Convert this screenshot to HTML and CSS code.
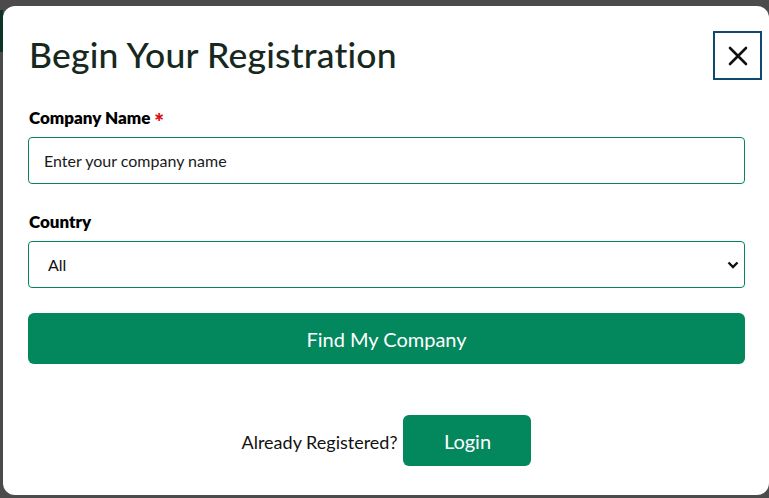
FILE: index.html
```html
<!DOCTYPE html>
<html lang="en">
<head>
  <meta charset="UTF-8">
  <meta name="viewport" content="width=device-width, initial-scale=1.0">
  <title>Begin Your Registration</title>
  <link rel="stylesheet" href="styles.css">
</head>
<body>
  <div class="backdrop">
    <div class="bg-strip"></div>
    <div class="modal">
      <div class="modal-head">
        <h2>Begin Your Registration</h2>
        <button class="close" aria-label="Close">
          <svg width="20" height="20" viewBox="0 0 20 20"><path d="M2 2L18 18M18 2L2 18" stroke="#111" stroke-width="2.6" stroke-linecap="round"/></svg>
        </button>
      </div>

      <label for="companyName">Company Name <span class="req">*</span></label>
      <input type="text" id="companyName" placeholder="Enter your company name">

      <label for="country">Country</label>
      <div class="select-wrap">
        <select id="country">
          <option value="all">All</option>
        </select>
        <svg class="chev" width="12" height="8" viewBox="0 0 12 8"><path d="M1.5 1.5L6 6L10.5 1.5" stroke="#111" stroke-width="2.4" fill="none"/></svg>
      </div>

      <button class="btn btn-find">Find My Company</button>

      <div class="footer">
        <span>Already Registered?</span>
        <button class="btn btn-login">Login</button>
      </div>
    </div>
  </div>
</body>
</html>
```

FILE: styles.css
```css
body {
  margin: 0;
  font-family: Lato, "Noto Sans", sans-serif;
  background: #4b4b4b;
  height: 100vh;
  overflow: hidden;
}
.backdrop {
  position: relative;
  height: 100%;
  padding: 6px 0 3px 3px;
  box-sizing: border-box;
}
.bg-strip {
  position: absolute;
  left: 0;
  top: 10px;
  width: 3px;
  height: 42px;
  background: #0f3326;
}
.modal {
  position: relative;
  background: #fff;
  border-radius: 12px;
  height: 100%;
  padding: 0 24px 0 25px;
  box-sizing: border-box;
}
.modal-head {
  display: flex;
  justify-content: space-between;
  align-items: flex-start;
  padding-top: 25px;
  margin-bottom: 28px;
}
h2 {
  margin: 2px 0 0 1px;
  font-size: 35.5px;
  font-weight: 500;
  color: #17291f;
  letter-spacing: 0.2px;
}
.close {
  width: 49px;
  height: 49px;
  margin-right: -17px;
  border: 2px solid #0d4a6b;
  background: #fff;
  display: flex;
  align-items: center;
  justify-content: center;
  padding: 0;
  cursor: pointer;
}
label {
  display: block;
  height: 20px;
  line-height: 20px;
  font-size: 17px;
  font-weight: 800;
  color: #000;
  margin: 0 0 9px 1px;
}
.req {
  color: #e01010;
  font-size: 23px;
  line-height: 0;
  vertical-align: -6px;
}
input, select {
  width: 100%;
  height: 47px;
  box-sizing: border-box;
  border: 1px solid #04865a;
  border-radius: 4px;
  font-family: inherit;
  font-size: 16px;
  color: #111;
  background: #fff;
  margin-bottom: 28px;
}
input {
  padding: 0 15px;
}
input::placeholder {
  color: #1a1a1a;
}
.select-wrap {
  position: relative;
}
select {
  appearance: none;
  padding: 0 19px;
  margin-bottom: 25px;
}
.chev {
  position: absolute;
  right: 6px;
  top: 20px;
}
.btn {
  background: #03875c;
  color: #fff;
  border: none;
  border-radius: 6px;
  font-family: inherit;
  font-size: 20px;
  cursor: pointer;
}
.btn-find {
  width: 100%;
  height: 51px;
}
.footer {
  display: flex;
  justify-content: center;
  align-items: center;
  gap: 6px;
  margin-top: 51px;
  font-size: 18px;
  color: #111;
}
.footer span {
  margin-top: 2px;
}
.btn-login {
  width: 128px;
  height: 51px;
}
```
